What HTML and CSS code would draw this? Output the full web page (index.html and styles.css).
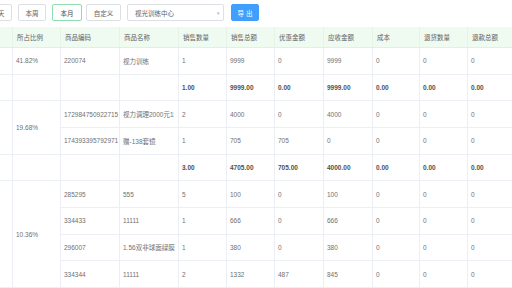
FILE: index.html
```html
<!DOCTYPE html>
<html lang="zh-CN">

<head>
  <meta charset="UTF-8" />
  <title>销售统计</title>
  <meta name="viewport" content="width=device-width, initial-scale=1.0" />
  <link rel="stylesheet" href="styles.css">
</head>

<body>
  <div class="page">
    <div class="toolbar">
      <button class="btn">今天</button>
      <button class="btn">本周</button>
      <button class="btn active">本月</button>
      <button class="btn">自定义</button>
      <div class="select">
        <span>视光训练中心</span>
        <span class="arrow">▾</span>
      </div>
      <button class="btn primary">导 出</button>
    </div>

    <div class="table-wrap">
      <table class="report">
        <colgroup>
          <col style="width:60px">
          <col style="width:48px">
          <col style="width:59px">
          <col style="width:59px">
          <col style="width:48px">
          <col style="width:48px">
          <col style="width:49px">
          <col style="width:49px">
          <col style="width:47px">
          <col style="width:48px">
          <col style="width:60px">
        </colgroup>
        <thead>
          <tr>
            <th></th>
            <th>所占比例</th>
            <th>商品编码</th>
            <th>商品名称</th>
            <th>销售数量</th>
            <th>销售总额</th>
            <th>优惠金额</th>
            <th>应收金额</th>
            <th>成本</th>
            <th>退货数量</th>
            <th>退款总额</th>
          </tr>
        </thead>
        <tbody>
          <tr>
            <td></td>
            <td>41.82%</td>
            <td>220074</td>
            <td>视力训练</td>
            <td>1</td>
            <td>9999</td>
            <td>0</td>
            <td>9999</td>
            <td>0</td>
            <td>0</td>
            <td>0</td>
          </tr>
          <tr class="sum">
            <td></td>
            <td></td>
            <td></td>
            <td></td>
            <td>1.00</td>
            <td>9999.00</td>
            <td>0.00</td>
            <td>9999.00</td>
            <td>0.00</td>
            <td>0.00</td>
            <td>0.00</td>
          </tr>
          <tr>
            <td rowspan="2"></td>
            <td rowspan="2">19.68%</td>
            <td>172984750922715</td>
            <td><div class="clip">视力调理2000元15次</div></td>
            <td>2</td>
            <td>4000</td>
            <td>0</td>
            <td>4000</td>
            <td>0</td>
            <td>0</td>
            <td>0</td>
          </tr>
          <tr>
            <td>174393395792971</td>
            <td>赠-138套镜</td>
            <td>1</td>
            <td>705</td>
            <td>705</td>
            <td>0</td>
            <td>0</td>
            <td>0</td>
            <td>0</td>
          </tr>
          <tr class="sum">
            <td></td>
            <td></td>
            <td></td>
            <td></td>
            <td>3.00</td>
            <td>4705.00</td>
            <td>705.00</td>
            <td>4000.00</td>
            <td>0.00</td>
            <td>0.00</td>
            <td>0.00</td>
          </tr>
          <tr>
            <td rowspan="4"></td>
            <td rowspan="4">10.36%</td>
            <td>285295</td>
            <td>555</td>
            <td>5</td>
            <td>100</td>
            <td>0</td>
            <td>100</td>
            <td>0</td>
            <td>0</td>
            <td>0</td>
          </tr>
          <tr>
            <td>334433</td>
            <td>11111</td>
            <td>1</td>
            <td>666</td>
            <td>0</td>
            <td>666</td>
            <td>0</td>
            <td>0</td>
            <td>0</td>
          </tr>
          <tr>
            <td>296007</td>
            <td>1.56双非球面绿膜</td>
            <td>1</td>
            <td>380</td>
            <td>0</td>
            <td>380</td>
            <td>0</td>
            <td>0</td>
            <td>0</td>
          </tr>
          <tr>
            <td>334344</td>
            <td>11111</td>
            <td>2</td>
            <td>1332</td>
            <td>487</td>
            <td>845</td>
            <td>0</td>
            <td>0</td>
            <td>0</td>
          </tr>
        </tbody>
      </table>
    </div>
  </div>
</body>

</html>
```

FILE: styles.css
```css
/* report page, scrolled a little to the right */
body {
  margin: 0;
  background: #fff;
  font-family: 'Liberation Sans', 'Noto Sans CJK SC', sans-serif;
  color: #606266;
  overflow: hidden;
}

.page {
  width: 512px;
  height: 288px;
  overflow: hidden;
}

.toolbar {
  display: flex;
  align-items: center;
  height: 17px;
  padding-top: 4px;
  margin-left: -16px;
  margin-bottom: 6px;
}

.btn {
  height: 17px;
  padding: 0;
  margin-right: 6px;
  border: 1px solid #dcdfe6;
  border-radius: 2px;
  background: #fff;
  color: #606266;
  font-family: inherit;
  font-size: 6.5px;
  width: 28px;
  cursor: pointer;
}

.btn:nth-child(3) {
  width: 30px;
  margin-right: 4px;
}

.btn:nth-child(4) {
  width: 35px;
}

.btn.active {
  border-color: #8fdcae;
  color: #4a4a4a;
}

.btn.primary {
  background: #409eff;
  border-color: #409eff;
  color: #fff;
  width: 28px;
}

.select {
  display: flex;
  align-items: center;
  justify-content: space-between;
  box-sizing: border-box;
  width: 97px;
  height: 17px;
  margin-right: 7px;
  padding: 0 3px 0 7px;
  border: 1px solid #dcdfe6;
  border-radius: 2px;
  font-size: 6.5px;
  color: #606266;
}

.select .arrow {
  color: #b0b3b8;
  font-size: 5px;
}

.table-wrap {
  overflow: hidden;
}

.report {
  margin-left: -48px;
  table-layout: fixed;
  border-collapse: collapse;
  width: 575px;
  font-size: 6.5px;
}

.report th {
  height: 20px;
  background: #effaf1;
  color: #606266;
  font-weight: normal;
  text-align: left;
  padding: 0 4px;
  border-right: 1px solid #e6f3e9;
  border-bottom: 1px solid #e3eee6;
  white-space: nowrap;
}

.report td {
  height: 25.67px;
  padding: 0 4px 0 3px;
  border: 1px solid #ebeef5;
  border-top: none;
  white-space: nowrap;
  overflow: hidden;
  color: #707070;
}

.report .clip {
  overflow: hidden;
}

.report tr.sum td {
  color: #505050;
  font-weight: bold;
}
```
